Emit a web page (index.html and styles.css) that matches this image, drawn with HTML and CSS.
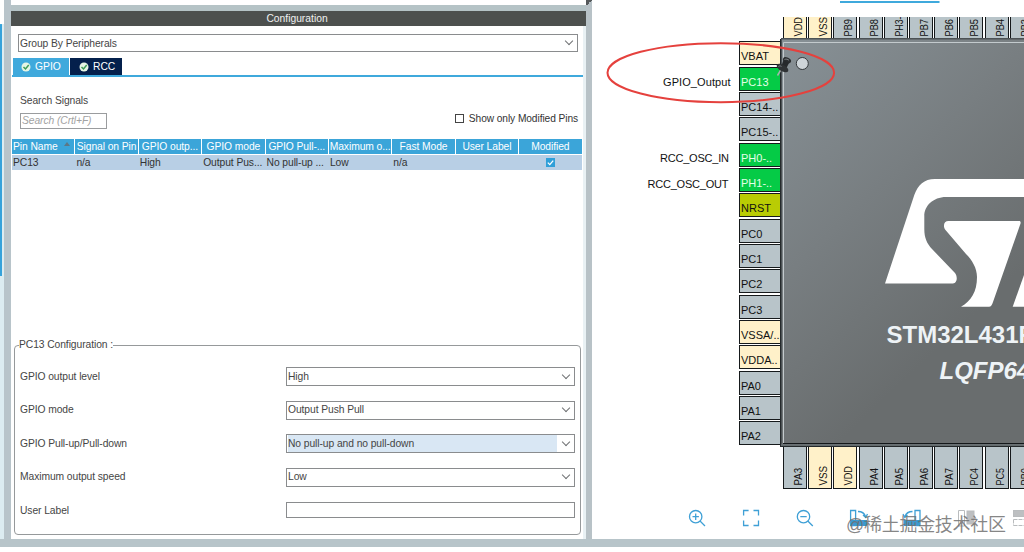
FILE: index.html
```html
<!DOCTYPE html>
<html lang="en">
<head>
  <meta charset="UTF-8">
  <title>Pinout &amp; Configuration</title>
  <link rel="stylesheet" href="styles.css">
</head>
<body>
  <div class="workspace">
    <div class="side"><div class="side-scroll"></div></div>

    <div class="config">
      <div class="config-top"></div>
      <div class="config-title">Configuration</div>
      <div class="config-body">
        <div class="select group-select"><span>Group By Peripherals</span><i class="chevron"></i></div>

        <div class="tabs">
          <div class="tab active"><svg width="10" height="10" viewBox="0 0 10 10"><circle cx="5" cy="5" r="4.5" fill="#e6f5e4"/><path d="M2.5 5l2 2 3.2-4" fill="none" stroke="#3f9c57" stroke-width="1.5"/></svg>GPIO</div>
          <div class="tab"><svg width="10" height="10" viewBox="0 0 10 10"><circle cx="5" cy="5" r="4.5" fill="#e6f5e4"/><path d="M2.5 5l2 2 3.2-4" fill="none" stroke="#3f9c57" stroke-width="1.5"/></svg>RCC</div>
        </div>

        <div class="search-label">Search Signals</div>
        <div class="search-row">
          <div class="search-box">Search (Crtl+F)</div>
          <div class="only-modified"><i class="box"></i>Show only Modified Pins</div>
        </div>

        <div class="table head">
          <div class="sorted">Pin Name<i></i></div>
          <div>Signal on Pin</div>
          <div>GPIO outp...</div>
          <div>GPIO mode</div>
          <div>GPIO Pull-...</div>
          <div>Maximum o...</div>
          <div>Fast Mode</div>
          <div>User Label</div>
          <div>Modified</div>
        </div>
        <div class="table row">
          <div>PC13</div>
          <div>n/a</div>
          <div>High</div>
          <div>Output Pus...</div>
          <div>No pull-up ...</div>
          <div>Low</div>
          <div>n/a</div>
          <div></div>
          <div class="check"><svg width="9" height="9" viewBox="0 0 9 9"><rect width="9" height="9" fill="#2f9fd8"/><path d="M1.8 4.6l2 2 3.4-4" fill="none" stroke="#fff" stroke-width="1.3"/></svg></div>
        </div>

        <fieldset class="pin-config">
          <legend>PC13 Configuration :</legend>
          <div class="field"><label>GPIO output level</label><div class="select"><span>High</span><i class="chevron"></i></div></div>
          <div class="field"><label>GPIO mode</label><div class="select"><span>Output Push Pull</span><i class="chevron"></i></div></div>
          <div class="field"><label>GPIO Pull-up/Pull-down</label><div class="select focused"><span>No pull-up and no pull-down</span><i class="chevron"></i></div></div>
          <div class="field"><label>Maximum output speed</label><div class="select"><span>Low</span><i class="chevron"></i></div></div>
          <div class="field"><label>User Label</label><div class="select text"></div></div>
        </fieldset>
      </div>
    </div>

    <div class="splitter"><div class="corner"></div></div>

    <div class="pinout">
      <svg class="chip" width="432" height="539" viewBox="592 0 432 539">
        <defs>
          <linearGradient id="body" gradientUnits="userSpaceOnUse" x1="783" y1="60" x2="1000" y2="290">
            <stop offset="0" stop-color="#868f94"/>
            <stop offset=".5" stop-color="#787e81"/>
            <stop offset="1" stop-color="#696d6e"/>
          </linearGradient>
          <clipPath id="canvas"><rect x="592" y="17" width="432" height="480"/></clipPath>
        </defs>

        <rect x="840" y="1" width="99.500" height="2" fill="#3fa9dc"/>

        <g id="pins" clip-path="url(#canvas)"></g>

        <!-- package -->
        <rect x="781" y="38" width="260" height="409" fill="#4c5255"/>
        <rect x="782" y="39.500" width="260" height="405" fill="url(#body)"/>
        <path d="M783.500 443V42.500H1024" fill="none" stroke="#c3cacd"/>
        <path d="M783 443.500h241" stroke="#14181a"/>
        <path d="M781 445h243" stroke="#7b8386"/>
        <path d="M781 446.500h243M780.500 39v408" stroke="#24292b"/>
        <circle cx="802.300" cy="63.500" r="6" fill="#ced5d9" stroke="#33383b"/>

        <!-- logo -->
        <g fill="#fff">
          <path d="M885 283.500L914.300 195C918 185 924 179 935 179H1024V197H946C933 197 924.300 206 924.300 216V229C924.300 238 927 243.500 932 249L955 273C958 277 957 283.500 953 283.500Z"/>
          <path d="M948.500 221H1019C1021 221 1021 223 1020 225L993 302C992 305 991 306.700 989 306.700H961C971 301 977 292 977 277C977 268 972 260 966 254L945.500 230C942.500 226 944 221 948.500 221Z"/>
          <path d="M1012.700 306.700L1024 275V306.700Z"/>
        </g>
        <text class="part" x="886.500" y="343">STM32L431R</text>
        <text class="part package" x="939.500" y="378.500">LQFP64</text>

        <text class="signal" x="663" y="86" textLength="67.500">GPIO_Output</text>
        <text class="signal" x="660" y="162" textLength="69">RCC_OSC_IN</text>
        <text class="signal" x="647.500" y="187.500" textLength="81">RCC_OSC_OUT</text>

        <!-- push pin on PC13 -->
        <path d="M781 69.500l-3.500 6" stroke="#a9b0ae" stroke-width="1.500"/>
        <ellipse cx="787" cy="60.300" rx="4.300" ry="2.700" transform="rotate(25 787 60.300)" fill="#2b2e30"/>
        <path d="M783.500 60l5.500 3-2.500 5-5-2.500z" fill="#26292b"/>
        <ellipse cx="782.500" cy="68" rx="6.500" ry="3.200" transform="rotate(30 782.500 68)" fill="#2f3234"/>
        <path d="M784.500 59.500c1.500-.8 3.500-.2 4.500.8M778.500 66.500c1-1 2.500-.5 3 0" fill="none" stroke="#7d8387"/>

        <ellipse cx="720.800" cy="72.700" rx="113.300" ry="29.500" fill="none" stroke="#e5413d" stroke-width="2"/>

        <!-- view toolbar -->
        <g fill="none" stroke="#3fa0d6" stroke-width="1.300">
          <circle cx="695.700" cy="516.700" r="6.200"/>
          <path d="M700 521l5 5M692.500 516.700h6.400M695.700 513.500v6.400"/>
          <path d="M743.600 515.500v-5h5M753.500 510.500h5v5M758.500 520.500v5h-5M748.600 525.500h-5v-5"/>
          <circle cx="803.500" cy="516.700" r="6.200"/>
          <path d="M807.800 521l5 5M800.300 516.700h6.400"/>
          <path d="M850.600 525.500v-15h5v15z"/>
          <path d="M858 511.500c4 0 6.500 2 7.500 5M863 515l2.700 2.500 1.800-3.500"/>
          <path d="M920 525.500v-15h-5v15z"/>
          <path d="M912.500 511.500c-4 0-6.500 2-7.500 5M907.500 515l-2.700 2.500-1.800-3.500"/>
        </g>
        <path d="M851 520h16v6h-16zM904 520h16v6h-16z" fill="#3b99cf"/>
        <g stroke="#b9bcbe" fill="none">
          <path d="M958.500 526v-15.500h6v15.500z"/>
          <rect x="967" y="511" width="7" height="13" fill="#bdbfc1"/>
          <rect x="1013.500" y="510.500" width="14" height="6" fill="#bdbfc1"/>
          <path d="M1013.500 519.500h11M1013.500 525.500h11M1013.500 519.500v6" stroke-dasharray="4 1"/>
        </g>
        <text class="watermark" x="846" y="531" textLength="160">@稀土掘金技术社区</text>
      </svg>
    </div>
  </div>
  <div class="bottom-bar"></div>

  <script src="pins.js"></script>
</body>
</html>
```
FILE: styles.css
```css
body {
  margin: 0;
  height: 552px;
  overflow: hidden;
  background-color: #fff;
  color: #454545;
  font-family: "Liberation Sans", Arial, sans-serif;
  font-size: 10.3px;
  letter-spacing: -0.08px;
  line-height: 14px;
  white-space: nowrap;
}

.workspace {
  display: flex;
  height: 539px;
}

.side {
  width: 4px;
  padding-top: 24px;
  box-sizing: border-box;
  background: linear-gradient(#fff 24px, #dcecf1 24px);
}

.side-scroll {
  width: 2px;
  height: 252px;
  border-top: 1px solid #3fa9dc;
  box-sizing: border-box;
  background-color: #36a2da;
}

.config {
  width: 575px;
  border-left: 7px solid #b8c4ca;
  display: flex;
  flex-direction: column;
}

.config-top {
  height: 5px;
  border-bottom: 6px solid #b5c3c6;
}

.config-title {
  height: 15px;
  line-height: 16px;
  background-color: #4d504e;
  color: #f0f0f0;
  letter-spacing: 0;
  text-align: center;
  text-indent: -3px;
}

.config-body {
  flex: 1;
  padding: 8px 0 0 1px;
  border-right: 3px solid #e9f1f4;
}

.select {
  display: flex;
  justify-content: space-between;
  align-items: center;
  box-sizing: border-box;
  width: 289px;
  height: 19px;
  padding-left: 1px;
  border: 1px solid #8a8c8e;
}

.select span {
  flex: 1;
}

.chevron {
  width: 5px;
  height: 5px;
  margin: -4px 5px 0 6px;
  border-right: 1px solid #707274;
  border-bottom: 1px solid #707274;
  transform: rotate(45deg);
}

.group-select {
  width: 560px;
  height: 18px;
  margin-left: 6px;
}

.group-select span {
  padding-top: 1px;
}

.tabs {
  display: flex;
  gap: 1px;
  height: 17px;
  margin-top: 6px;
  padding-left: 1px;
  border-bottom: 2px solid #3fa9dc;
}

.tab {
  display: flex;
  align-items: center;
  gap: 4px;
  box-sizing: border-box;
  width: 52px;
  height: 17px;
  padding-left: 9px;
  background-color: #04204c;
  color: #fff;
  font-size: 10.300px;
  letter-spacing: 0;
}

.tab.active {
  width: 56px;
  padding-left: 8px;
  background-color: #3fa9dc;
}

.search-label {
  margin: 17px 0 0 8px;
}

.search-row {
  display: flex;
  justify-content: space-between;
  margin: 5px 5px 0 8px;
}

.search-box {
  box-sizing: border-box;
  width: 87px;
  height: 16px;
  padding-left: 1px;
  border: 1px solid #9a9c9e;
  color: #a2a2a2;
  font-style: italic;
}

.only-modified {
  display: flex;
  align-items: center;
  height: 11px;
  gap: 5px;
  color: #333;
  font-size: 10.200px;
}

.box {
  width: 7px;
  height: 7px;
  border: 1px solid #444;
}

.table {
  display: grid;
  grid-template-columns: repeat(9, 62.400px);
  column-gap: 1px;
  width: 570px;
}

.head {
  height: 15px;
  margin-top: 10px;
  color: #fff;
  text-align: center;
}

.head div {
  height: 15px;
  line-height: 15px;
  background-color: #3ba5d9;
}

.sorted {
  display: flex;
  gap: 6px;
  padding-left: 1px;
}

.sorted i {
  width: 0;
  height: 0;
  margin-top: 3px;
  border: 3px solid transparent;
  border-top: 0;
  border-bottom: 4px solid #5d7785;
}

.row {
  height: 15px;
  line-height: 15px;
  margin-top: 1px;
  background-color: #b8cfe5;
  color: #333;
}

.row div {
  padding-left: 1px;
}

.row .check {
  display: flex;
  align-items: center;
  justify-content: center;
}

.pin-config {
  box-sizing: border-box;
  width: 567px;
  height: 197px;
  margin: 168px 0 0 2px;
  padding: 15px 5px 0;
  border: 1px solid #96999b;
  border-radius: 4px;
}

.pin-config legend {
  margin-left: -1px;
  padding: 0;
}

.field {
  display: flex;
  justify-content: space-between;
  align-items: center;
  height: 19px;
  margin-bottom: 14.500px;
}

.focused span {
  height: 17px;
  line-height: 17px;
  background-color: #d9e7f4;
}

.select.text {
  height: 16px;
  margin-top: -1px;
}

.splitter {
  width: 6px;
  background-color: #b8c2c7;
}

.corner {
  height: 6px;
  background: linear-gradient(135deg, #55595b 50%, #b8c2c7 50%);
}

.pinout {
  flex: 1;
}

.chip {
  display: block;
  letter-spacing: 0;
}

.pin-name,
.signal {
  font-size: 11px;
  fill: #111;
}

.part {
  font-size: 24px;
  font-weight: bold;
  fill: #eef3f6;
}

.package {
  font-style: italic;
}

.watermark {
  font-family: "Liberation Sans", "Noto Sans CJK SC", sans-serif;
  font-size: 18px;
  fill: #707070;
  fill-opacity: 0.85;
}

.bottom-bar {
  height: 8px;
  background-color: #b7c4c9;
}
```
FILE: pins.js
```js
const NS = "http://www.w3.org/2000/svg";
const pins = document.getElementById("pins");

const left = ["VBAT", "PC13", "PC14-..", "PC15-..", "PH0-..", "PH1-..", "NRST", "PC0",
  "PC1", "PC2", "PC3", "VSSA/..", "VDDA..", "PA0", "PA1", "PA2"];
const topRow = ["VDD", "VSS", "PB9", "PB8", "PH3-", "PB7", "PB6", "PB5", "PB4", "PB3"];
const bottomRow = ["PA3", "VSS", "VDD", "PA4", "PA5", "PA6", "PA7", "PC4", "PC5", "PB0"];

function pinColor(name) {
  if (name[0] === "V") return "#fff1c9";
  if (name === "NRST") return "#b9cc04";
  if (name === "PC13" || name.startsWith("PH0") || name.startsWith("PH1")) return "#05cb46";
  return "#b8c4c9";
}

function add(tag, attrs, text) {
  const el = document.createElementNS(NS, tag);
  for (const key in attrs) el.setAttribute(key, attrs[key]);
  if (text) el.textContent = text;
  pins.appendChild(el);
  return el;
}

function drawPin(x, y, w, h, name) {
  add("rect", { x: x + 0.5, y: y + 0.5, width: w, height: h, fill: pinColor(name), stroke: "#15191b" });
}

left.forEach((name, i) => {
  const y = Math.round(41.3 + i * 25.33);
  drawPin(739, y, 45, 23, name);
  const label = add("text", { class: "pin-name", x: 741, y: y + 19 }, name);
  if (pinColor(name) === "#05cb46") label.style.fill = "#e4ffe9";
});

// labels of the horizontal rows read bottom to top
function drawRow(names, y, h, baseline) {
  names.forEach((name, i) => {
    const x = Math.round(783 + i * 25.2);
    drawPin(x, y, 23, h, name);
    add("text", {
      class: "pin-name",
      transform: `translate(${x + 19} ${baseline}) rotate(-90)`,
      textLength: name[0] === "V" ? 19.5 : name.length > 3 ? 20 : 17.5,
      lengthAdjust: "spacingAndGlyphs"
    }, name);
  });
}

drawRow(topRow, 10, 32, 36.5);
drawRow(bottomRow, 444, 44, 485.5);
```
